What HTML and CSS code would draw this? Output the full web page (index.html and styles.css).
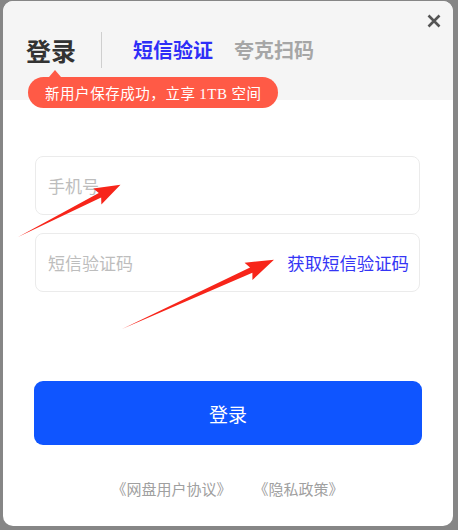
FILE: index.html
```html
<!DOCTYPE html>
<html lang="zh-CN">
<head>
<meta charset="utf-8">
<title>登录</title>
<link rel="stylesheet" href="styles.css">
</head>
<body>
<div class="modal">
  <div class="header">
    <div class="close">
      <svg width="14" height="14" viewBox="0 0 14 14"><path d="M1.5 1.5 L12.5 12.5 M12.5 1.5 L1.5 12.5" stroke="#555" stroke-width="2.6" stroke-linecap="butt"/></svg>
    </div>
    <div class="tabs">
      <span class="title">登录</span>
      <span class="divider"></span>
      <span class="tab active">短信验证</span>
      <span class="tab">夸克扫码</span>
    </div>
    <div class="badge">新用户保存成功，立享 <span class="latin">1TB</span> 空间</div>
  </div>
  <div class="form">
    <div class="field"><span class="ph">手机号</span></div>
    <div class="field"><span class="ph">短信验证码</span><span class="get-code">获取短信验证码</span></div>
    <div class="submit">登录</div>
    <div class="links">
      <span>《网盘用户协议》</span>
      <span>《隐私政策》</span>
    </div>
  </div>
</div>
<svg class="arrows" width="458" height="530" viewBox="0 0 458 530">
  <g transform="translate(18 237) rotate(-27)">
    <polygon points="0,0 92,-2.6 89,-9 115,0 89,9 92,2.6" fill="#f7251a"/>
  </g>
  <g transform="translate(122 329) rotate(-24.5)">
    <polygon points="0,0 142,-2.8 139,-9.5 167,0 139,9.5 142,2.8" fill="#f7251a"/>
  </g>
</svg>
</body>
</html>
```

FILE: styles.css
```css
html, body {
  margin: 0;
  padding: 0;
}
body {
  background: #868686;
  width: 458px;
  height: 530px;
  position: relative;
  overflow: hidden;
  font-family: "Noto Sans CJK SC", "Noto Sans", sans-serif;
}
.modal {
  position: relative;
  margin: 1px 0 0 3px;
  width: 450px;
  height: 525px;
  background: #fff;
  border-radius: 10px;
  overflow: hidden;
  display: flex;
  flex-direction: column;
}
.header {
  position: relative;
  height: 99px;
  background: #f5f5f5;
  flex: none;
}
.close {
  position: absolute;
  top: 13px;
  right: 12px;
  width: 14px;
  height: 14px;
  display: flex;
}
.tabs {
  display: flex;
  align-items: center;
  padding: 31px 0 0 23px;
  height: 36px;
}
.title {
  font-size: 25px;
  font-weight: 700;
  color: #333;
  line-height: 36px;
}
.divider {
  width: 1px;
  height: 36px;
  background: #cfcfcf;
  margin-left: 25px;
}
.tab {
  font-size: 20px;
  font-weight: 700;
  color: #a6a6a6;
  line-height: 36px;
  margin-left: 21px;
}
.tab.active {
  color: #2e2ef7;
  margin-left: 31px;
}
.badge {
  position: absolute;
  left: 25px;
  top: 76px;
  height: 31px;
  line-height: 31px;
  padding: 0 16px 0 17px;
  border-radius: 16px;
  background: #ff5a46;
  color: #fff;
  font-size: 14.5px;
  letter-spacing: 0.55px;
  z-index: 2;
  white-space: nowrap;
}
.badge::before {
  content: "";
  position: absolute;
  left: 21px;
  top: -7px;
  border-left: 6px solid transparent;
  border-right: 6px solid transparent;
  border-bottom: 7px solid #ff5a46;
}
.latin {
  font-family: "Liberation Serif", serif;
  font-size: 15px;
}
.form {
  display: flex;
  flex-direction: column;
  padding: 56px 33px 0 32px;
}
.field {
  box-sizing: border-box;
  height: 59px;
  border: 1px solid #ebebeb;
  border-radius: 8px;
  padding: 0 10px 0 12px;
  display: flex;
  align-items: center;
  justify-content: space-between;
}
.field + .field {
  margin-top: 18px;
}
.ph {
  font-size: 17px;
  color: #bdbdbd;
}
.get-code {
  font-size: 17.4px;
  color: #3535f5;
}
.submit {
  margin: 89px -2px 0 -1px;
  height: 64px;
  border-radius: 9px;
  background: #0f55ff;
  color: #fff;
  font-size: 19px;
  display: flex;
  align-items: center;
  justify-content: center;
}
.links {
  margin-top: 35px;
  display: flex;
  justify-content: center;
  gap: 22px;
  font-size: 15px;
  line-height: 18px;
  color: #a0a0a0;
}
.arrows {
  position: absolute;
  left: 0;
  top: 0;
  pointer-events: none;
}
```
